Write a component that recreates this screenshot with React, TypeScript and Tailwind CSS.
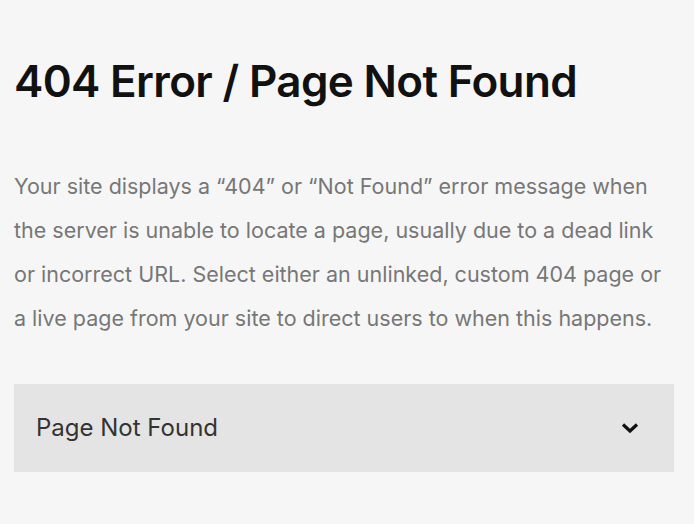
import React from 'react'

export default function App() {
  return (
    <div className="min-h-[524px] bg-[#f6f6f6] pl-[14px] pr-[20px] pt-[54px] pb-[52px]" style={{ fontFamily: 'Inter, "Noto Sans", sans-serif' }}>
      <h1 className="text-[44px] leading-[54px] font-semibold text-[#111] tracking-[-0.015em]">404 Error / Page Not Found</h1>
      <p className="mt-[56px] text-[21.5px] leading-[44px] text-[#777]">
        Your site displays a “404” or “Not Found” error message when the server is unable to locate a page, usually due to a dead link or incorrect URL. Select either an unlinked, custom 404 page or a live page from your site to direct users to when this happens.
      </p>
      <div className="mt-[44px] flex h-[88px] items-center justify-between bg-[#e4e4e4] pl-[22px] pr-[35px]">
        <span className="text-[24px] text-[#333]">Page Not Found</span>
        <svg width="18" height="12" viewBox="0 0 18 12" fill="none">
          <path d="M2 2.5 L9 9 L16 2.5" stroke="#111" strokeWidth="3.2" />
        </svg>
      </div>
    </div>
  )
}
